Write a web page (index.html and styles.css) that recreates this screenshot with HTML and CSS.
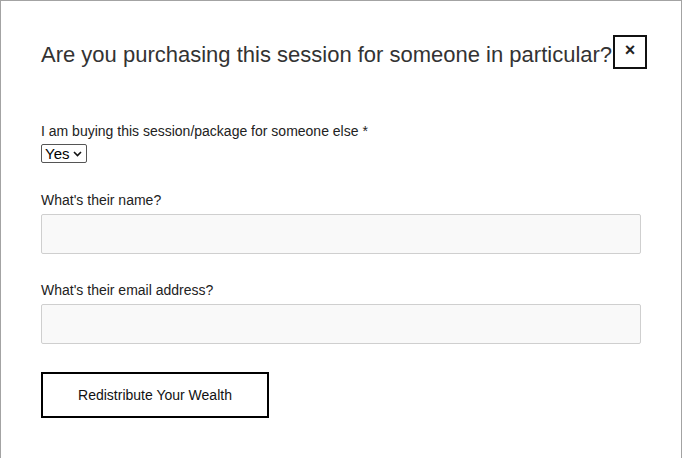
FILE: index.html
```html
<!DOCTYPE html>
<html>
<head>
<meta charset="utf-8">
<link rel="stylesheet" href="styles.css">
</head>
<body>
<div class="modal">
  <div class="header">
    <h2 class="title">Are you purchasing this session for someone in particular?</h2>
    <button class="close" type="button">&#215;</button>
  </div>
  <form class="form">
    <div class="field field-select">
      <label class="label">I am buying this session/package for someone else *</label>
      <div class="select-wrap">
        <select class="select"><option>Yes</option><option>No</option></select>
        <svg class="chevron" width="9" height="6" viewBox="0 0 9 6"><path d="M1 1l3.5 3.5L8 1" fill="none" stroke="#111" stroke-width="1.6"/></svg>
      </div>
    </div>
    <div class="field">
      <label class="label">What's their name?</label>
      <input class="input" type="text">
    </div>
    <div class="field">
      <label class="label">What's their email address?</label>
      <input class="input" type="email">
    </div>
    <button class="submit" type="button">Redistribute Your Wealth</button>
  </form>
</div>
</body>
</html>
```
FILE: styles.css
```css
html, body {
  margin: 0;
  padding: 0;
  background: #fff;
}
body {
  font-family: "Liberation Sans", Arial, Helvetica, sans-serif;
  color: #222;
}
.modal {
  box-sizing: border-box;
  width: 682px;
  height: 458px;
  border: 1px solid #a3a3a3;
  border-bottom: none;
  padding: 34px 40px 0 40px;
}
.header {
  display: flex;
  align-items: flex-start;
  gap: 1px;
  margin-right: -40px;
}
.title {
  margin: 7px 0 0 0;
  font-size: 22px;
  font-weight: normal;
  color: #333;
  line-height: 26px;
  white-space: nowrap;
}
.close {
  box-sizing: border-box;
  flex: none;
  width: 34px;
  height: 34px;
  border: 2px solid #111;
  background: #fff;
  padding: 0 0 4px 0;
  margin: 0;
  font-family: "Liberation Sans", Arial, sans-serif;
  font-size: 18px;
  font-weight: bold;
  line-height: 22px;
  color: #222;
  text-align: center;
}
.form {
  display: flex;
  flex-direction: column;
  align-items: flex-start;
  margin-top: 54px;
}
.field {
  display: flex;
  flex-direction: column;
  align-items: flex-start;
  width: 600px;
  margin-bottom: 28px;
}
.field-select {
  margin-bottom: 29px;
}
.label {
  font-size: 14px;
  line-height: 16px;
  color: #222;
  margin-bottom: 6px;
}
.field-select .label {
  margin-bottom: 5px;
}
.select-wrap {
  box-sizing: border-box;
  display: flex;
  align-items: center;
  gap: 3px;
  width: 46px;
  height: 19px;
  border: 1px solid #555;
  border-radius: 2px;
  background: #fff;
  padding: 0 4px 0 3px;
}
.select {
  -webkit-appearance: none;
  appearance: none;
  border: none;
  background: transparent;
  padding: 0;
  margin: 0;
  width: 25px;
  font-family: "Liberation Sans", Arial, sans-serif;
  font-size: 15px;
  line-height: 17px;
  color: #000;
  outline: none;
}
.chevron {
  flex: none;
}
.input {
  box-sizing: border-box;
  width: 600px;
  height: 40px;
  background: #f9f9f9;
  border: 1px solid #cfcfcf;
  border-radius: 2px;
  margin: 0;
}
.submit {
  box-sizing: border-box;
  width: 228px;
  height: 46px;
  border: 2px solid #000;
  background: #fff;
  font-family: "Liberation Sans", Arial, sans-serif;
  font-size: 14px;
  color: #111;
  margin: 0;
}
```
